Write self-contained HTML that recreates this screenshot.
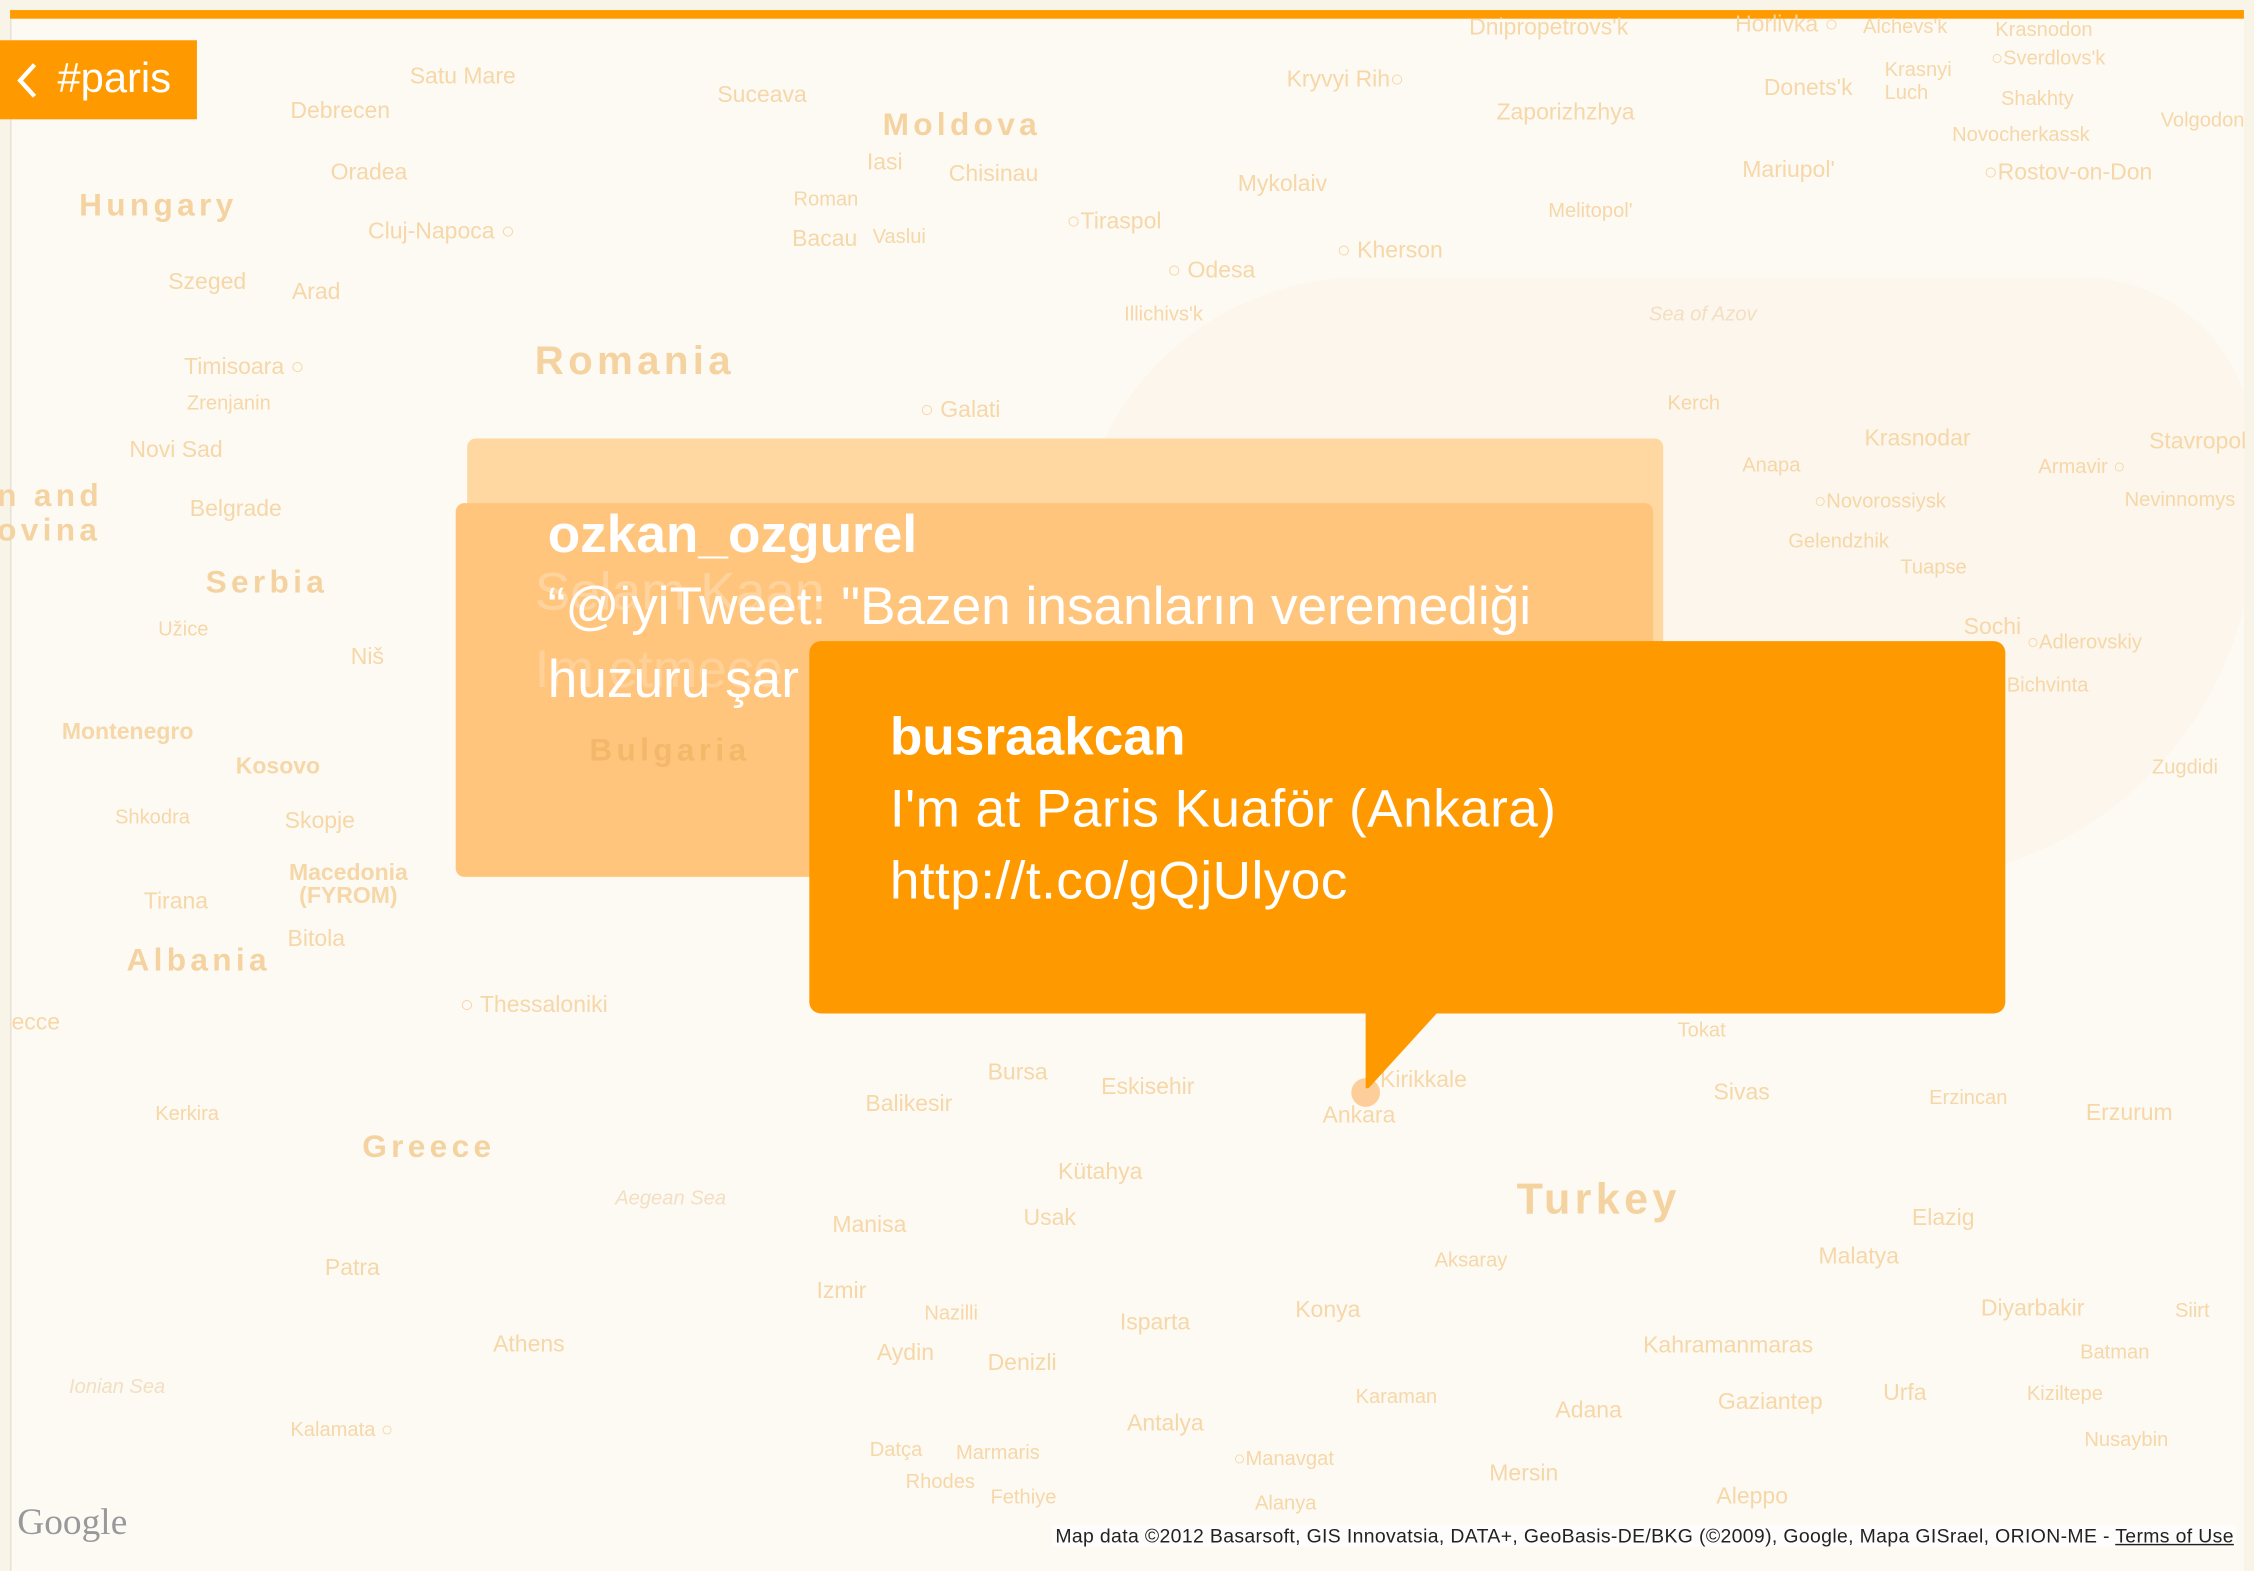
<!DOCTYPE html>
<html><head><meta charset="utf-8"><style>
html,body{margin:0;padding:0;width:2254px;height:1558px;overflow:hidden;background:#f8f4e8;font-family:"Liberation Sans",sans-serif}
#s{position:absolute;left:0;top:0;width:1568px;height:1084px;transform:scale(1.4375);transform-origin:0 0}
#map{position:absolute;left:7px;top:13px;width:1553px;height:1080px;background:#fdfaf4;border-left:1px solid #e6e0d4;overflow:hidden}
#bar{position:absolute;left:7px;top:7px;width:1554px;height:6px;background:#ff9a00}
.c{position:absolute;font-size:16px;color:#f6d7a8;white-space:nowrap;line-height:16px}
.k{position:absolute;font-size:24px;font-weight:bold;color:#f4d3a0;letter-spacing:3px;white-space:nowrap;line-height:24px}
.sea{position:absolute;font-size:14px;font-style:italic;color:#f3dfc2;white-space:nowrap}
.box{position:absolute;border-radius:6px}
.t{position:absolute;color:#fff;font-size:37px;line-height:50px;white-space:nowrap}
</style></head><body><div id="s">
<div id="map">
<div style="position:absolute;left:740px;top:180px;width:820px;height:420px;background:#fcf6ec;border-radius:200px 120px 250px 200px"></div>
</div>
<div id="bar"></div>
<div class="c" style="left:285px;top:46px">Satu Mare</div>
<div class="c" style="left:202px;top:70px">Debrecen</div>
<div class="c" style="left:230px;top:113px">Oradea</div>
<div class="c" style="left:256px;top:154px">Cluj-Napoca ○</div>
<div class="c" style="left:117px;top:189px">Szeged</div>
<div class="c" style="left:203px;top:196px">Arad</div>
<div class="c" style="left:128px;top:248px">Timisoara ○</div>
<div class="c" style="left:130px;top:272px;font-size:14px">Zrenjanin</div>
<div class="c" style="left:90px;top:306px">Novi Sad</div>
<div class="c" style="left:132px;top:347px">Belgrade</div>
<div class="c" style="left:110px;top:429px;font-size:14px">Užice</div>
<div class="c" style="left:244px;top:450px">Niš</div>
<div class="c" style="left:326px;top:501px">Sofia</div>
<div class="c" style="left:198px;top:564px">Skopje</div>
<div class="c" style="left:80px;top:560px;font-size:14px">Shkodra</div>
<div class="c" style="left:100px;top:620px">Tirana</div>
<div class="c" style="left:200px;top:646px">Bitola</div>
<div class="c" style="left:320px;top:692px">○ Thessaloniki</div>
<div class="c" style="left:108px;top:766px;font-size:14px">Kerkira</div>
<div class="c" style="left:226px;top:875px">Patra</div>
<div class="c" style="left:343px;top:928px">Athens</div>
<div class="c" style="left:202px;top:986px;font-size:14px">Kalamata ○</div>
<div class="c" style="left:408px;top:551px">Plovdiv</div>
<div class="c" style="left:499px;top:59px">Suceava</div>
<div class="c" style="left:603px;top:106px">Iasi</div>
<div class="c" style="left:552px;top:130px;font-size:14px">Roman</div>
<div class="c" style="left:551px;top:159px">Bacau</div>
<div class="c" style="left:607px;top:156px;font-size:14px">Vaslui</div>
<div class="c" style="left:660px;top:114px">Chisinau</div>
<div class="c" style="left:742px;top:147px">○Tiraspol</div>
<div class="c" style="left:812px;top:181px">○ Odesa</div>
<div class="c" style="left:782px;top:210px;font-size:14px">Illichivs'k</div>
<div class="c" style="left:640px;top:278px">○ Galati</div>
<div class="c" style="left:618px;top:305px">Braila</div>
<div class="c" style="left:490px;top:307px">Ploiesti</div>
<div class="c" style="left:895px;top:48px">Kryvyi Rih○</div>
<div class="c" style="left:1041px;top:71px">Zaporizhzhya</div>
<div class="c" style="left:861px;top:121px">Mykolaiv</div>
<div class="c" style="left:930px;top:167px">○ Kherson</div>
<div class="c" style="left:1077px;top:138px;font-size:14px">Melitopol'</div>
<div class="c" style="left:1022px;top:12px">Dnipropetrovs'k</div>
<div class="c" style="left:1207px;top:10px">Horlivka ○</div>
<div class="c" style="left:1296px;top:10px;font-size:14px">Alchevs'k</div>
<div class="c" style="left:1388px;top:12px;font-size:14px">Krasnodon</div>
<div class="c" style="left:1311px;top:40px;font-size:14px">Krasnyi<br>Luch</div>
<div class="c" style="left:1385px;top:32px;font-size:14px">○Sverdlovs'k</div>
<div class="c" style="left:1227px;top:54px">Donets'k</div>
<div class="c" style="left:1392px;top:60px;font-size:14px">Shakhty</div>
<div class="c" style="left:1358px;top:85px;font-size:14px">Novocherkassk</div>
<div class="c" style="left:1212px;top:111px">Mariupol'</div>
<div class="c" style="left:1380px;top:113px">○Rostov-on-Don</div>
<div class="c" style="left:1503px;top:75px;font-size:14px">Volgodon</div>
<div class="c" style="left:1160px;top:272px;font-size:14px">Kerch</div>
<div class="c" style="left:985px;top:306px">Simferopol'</div>
<div class="c" style="left:1075px;top:303px;font-size:14px">Feodosiya</div>
<div class="c" style="left:892px;top:350px">Sevastopol'○</div>
<div class="c" style="left:1018px;top:350px;font-size:14px">Yalta</div>
<div class="c" style="left:1212px;top:315px;font-size:14px">Anapa</div>
<div class="c" style="left:1297px;top:298px">Krasnodar</div>
<div class="c" style="left:1262px;top:340px;font-size:14px">○Novorossiysk</div>
<div class="c" style="left:1244px;top:368px;font-size:14px">Gelendzhik</div>
<div class="c" style="left:1322px;top:386px;font-size:14px">Tuapse</div>
<div class="c" style="left:1418px;top:316px;font-size:14px">Armavir ○</div>
<div class="c" style="left:1495px;top:300px">Stavropol</div>
<div class="c" style="left:1478px;top:339px;font-size:14px">Nevinnomys</div>
<div class="c" style="left:1366px;top:429px">Sochi</div>
<div class="c" style="left:1410px;top:438px;font-size:14px">○Adlerovskiy</div>
<div class="c" style="left:1396px;top:468px;font-size:14px">Bichvinta</div>
<div class="c" style="left:1497px;top:525px;font-size:14px">Zugdidi</div>
<div class="c" style="left:687px;top:739px">Bursa</div>
<div class="c" style="left:766px;top:749px">Eskisehir</div>
<div class="c" style="left:602px;top:761px">Balikesir</div>
<div class="c" style="left:960px;top:744px">Kirikkale</div>
<div class="c" style="left:920px;top:769px">Ankara</div>
<div class="c" style="left:1192px;top:753px">Sivas</div>
<div class="c" style="left:1342px;top:755px;font-size:14px">Erzincan</div>
<div class="c" style="left:1451px;top:767px">Erzurum</div>
<div class="c" style="left:1167px;top:708px;font-size:14px">Tokat</div>
<div class="c" style="left:736px;top:808px">Kütahya</div>
<div class="c" style="left:579px;top:845px">Manisa</div>
<div class="c" style="left:712px;top:840px">Usak</div>
<div class="c" style="left:568px;top:891px">Izmir</div>
<div class="c" style="left:998px;top:868px;font-size:14px">Aksaray</div>
<div class="c" style="left:1265px;top:867px">Malatya</div>
<div class="c" style="left:1330px;top:840px">Elazig</div>
<div class="c" style="left:1378px;top:903px">Diyarbakir</div>
<div class="c" style="left:1513px;top:903px;font-size:14px">Siirt</div>
<div class="c" style="left:1447px;top:932px;font-size:14px">Batman</div>
<div class="c" style="left:901px;top:904px">Konya</div>
<div class="c" style="left:779px;top:913px">Isparta</div>
<div class="c" style="left:687px;top:941px">Denizli</div>
<div class="c" style="left:610px;top:934px">Aydin</div>
<div class="c" style="left:643px;top:905px;font-size:14px">Nazilli</div>
<div class="c" style="left:1143px;top:929px">Kahramanmaras</div>
<div class="c" style="left:1195px;top:968px">Gaziantep</div>
<div class="c" style="left:1310px;top:962px">Urfa</div>
<div class="c" style="left:1410px;top:961px;font-size:14px">Kiziltepe</div>
<div class="c" style="left:1450px;top:993px;font-size:14px">Nusaybin</div>
<div class="c" style="left:943px;top:963px;font-size:14px">Karaman</div>
<div class="c" style="left:1082px;top:974px">Adana</div>
<div class="c" style="left:784px;top:983px">Antalya</div>
<div class="c" style="left:858px;top:1006px;font-size:14px">○Manavgat</div>
<div class="c" style="left:1036px;top:1018px">Mersin</div>
<div class="c" style="left:873px;top:1037px;font-size:14px">Alanya</div>
<div class="c" style="left:1194px;top:1034px">Aleppo</div>
<div class="c" style="left:665px;top:1002px;font-size:14px">Marmaris</div>
<div class="c" style="left:605px;top:1000px;font-size:14px">Datça</div>
<div class="c" style="left:630px;top:1022px;font-size:14px">Rhodes</div>
<div class="c" style="left:689px;top:1033px;font-size:14px">Fethiye</div>
<div class="c" style="left:8px;top:704px">ecce</div>
<div class="k" style="left:55px;top:131px;font-size:22px">Hungary</div>
<div class="k" style="left:372px;top:239px;font-size:28px">Romania</div>
<div class="k" style="left:614px;top:75px;font-size:22px">Moldova</div>
<div class="k" style="left:143px;top:393px;font-size:22px">Serbia</div>
<div class="k" style="left:88px;top:656px;font-size:22px">Albania</div>
<div class="k" style="left:252px;top:786px;font-size:22px">Greece</div>
<div class="k" style="left:1055px;top:823px;font-size:30px">Turkey</div>
<div class="k" style="left:-2px;top:333px;font-size:22px">n and<br>ovina</div>
<div class="c" style="left:43px;top:502px;font-weight:bold">Montenegro</div>
<div class="c" style="left:164px;top:526px;font-weight:bold">Kosovo</div>
<div class="c" style="left:201px;top:600px;font-weight:bold;text-align:center">Macedonia<br>(FYROM)</div>
<div class="sea" style="left:1147px;top:210px">Sea of Azov</div>
<div class="sea" style="left:428px;top:825px">Aegean Sea</div>
<div class="sea" style="left:48px;top:956px">Ionian Sea</div>

<div class="box" style="left:325px;top:305px;width:832px;height:150px;background:#ffd7a0"></div>
<div class="box" style="left:317px;top:350px;width:833px;height:260px;background:#ffc57d"></div>
<div class="t" style="left:372px;top:387px;opacity:.25;color:#fff">Selam Kaan</div>
<div class="t" style="left:372px;top:441px;opacity:.2;color:#fff">Im etmece</div>
<div class="t" style="left:381px;top:347px;font-weight:bold">ozkan_ozgurel</div>
<div class="t" style="left:381px;top:397px">“@iyiTweet: "Bazen insanların veremediği</div>
<div class="t" style="left:381px;top:448px">huzuru şar</div>
<div class="k" style="left:410px;top:510px;font-size:22px;color:#f3b86a">Bulgaria</div>

<div style="position:absolute;left:940px;top:750px;width:20px;height:20px;border-radius:50%;background:rgba(255,170,80,.55)"></div>
<svg style="position:absolute;left:0;top:0" width="1568" height="1084"><polygon points="950,700 1004,700 952,757 950,757" fill="#ff9900"/></svg>
<div class="box" style="left:563px;top:446px;width:832px;height:259px;background:#ff9900;border-radius:8px"></div>
<div class="t" style="left:619px;top:488px;font-weight:bold">busraakcan</div>
<div class="t" style="left:619px;top:538px;letter-spacing:.3px">I'm at Paris Kuaför (Ankara)</div>
<div class="t" style="left:619px;top:588px;letter-spacing:.3px">http://t.co/gQjUlyoc</div>

<div style="position:absolute;left:0;top:28px;width:137px;height:55px;background:#ff9900"></div>
<svg style="position:absolute;left:10px;top:42px" width="18" height="28"><polyline points="14,3 4,14 14,25" fill="none" stroke="#fff" stroke-width="3"/></svg>
<div style="position:absolute;left:40px;top:38px;font-size:29px;color:#fff;line-height:34px">#paris</div>

<div style="position:absolute;left:12px;top:1044px;font-family:'Liberation Serif',serif;font-size:26px;color:#999;text-shadow:0 0 2px #fff">Google</div>
<div style="position:absolute;right:12px;top:1061px;font-size:13.5px;letter-spacing:.25px;color:#222;background:rgba(255,255,255,.6);padding:0 2px">Map data ©2012 Basarsoft, GIS Innovatsia, DATA+, GeoBasis-DE/BKG (©2009), Google, Mapa GISrael, ORION-ME - <u>Terms of Use</u></div>
</div></body></html>
